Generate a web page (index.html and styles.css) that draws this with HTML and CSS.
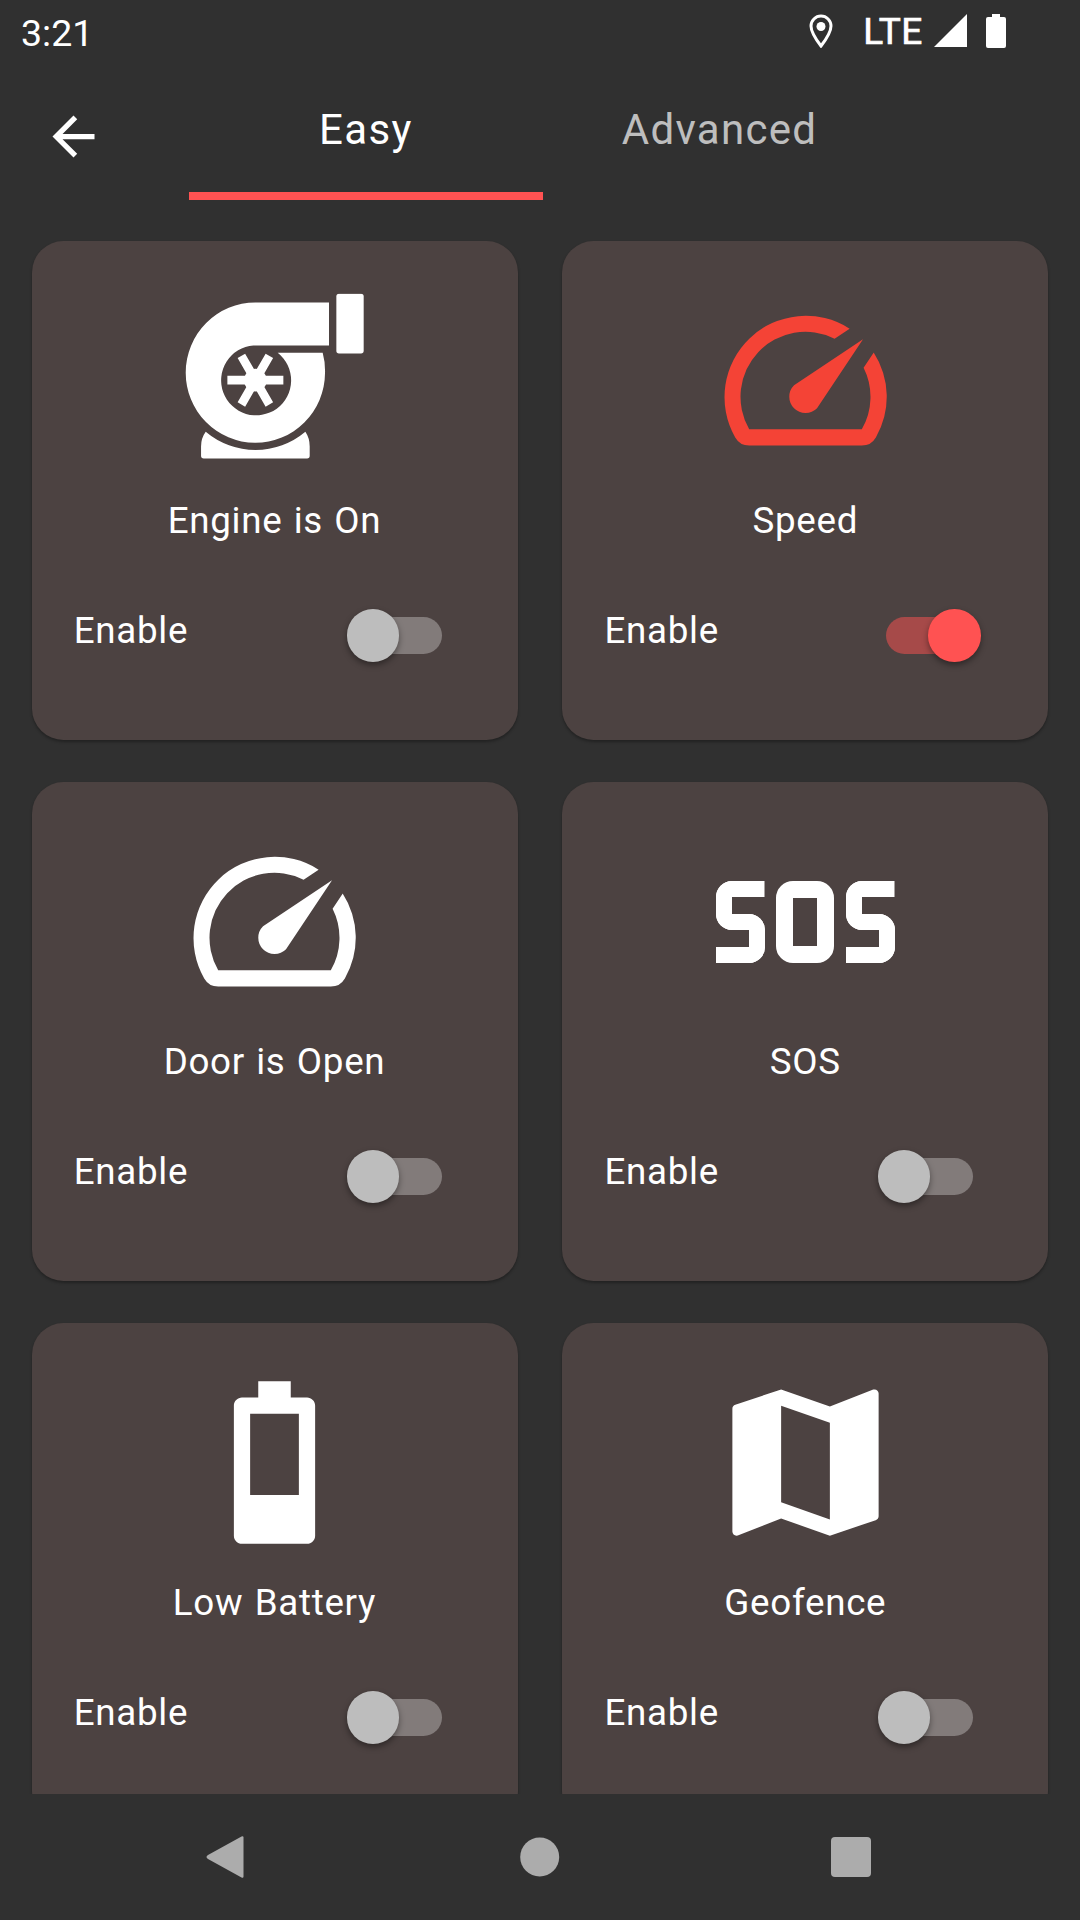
FILE: index.html
```html
<!DOCTYPE html>
<html lang="en">
<head>
  <meta charset="UTF-8" />
  <meta name="viewport" content="width=device-width, initial-scale=1.0">
  <title>Notifications</title>
  <link rel="stylesheet" href="styles.css">
</head>
<body>
  <div class="status-bar">
    <span class="clock">3:21</span>
    <div class="status-icons">
      <svg class="pin" viewBox="0 0 24 34">
        <path d="M12 2C6.500 2 2 6.500 2 12c0 7 10 20 10 20s10-13 10-20C22 6.500 17.500 2 12 2z" fill="none" stroke="#fff" stroke-width="3" />
        <circle cx="12" cy="12.500" r="4.500" fill="#fff" />
      </svg>
      <span class="network">LTE</span>
      <svg class="signal" viewBox="0 0 33 33"><path d="M33 0v33H0z" fill="#fff" /></svg>
      <svg class="battery" viewBox="0 0 20 34"><path d="M6 0h8v3h4q2 0 2 2v27q0 2-2 2H2q-2 0-2-2V5q0-2 2-2h4z" fill="#fff" /></svg>
    </div>
  </div>

  <header>
    <button class="back" aria-label="Back">
      <svg viewBox="0 0 24 24"><path d="M20 11H7.830l5.590-5.590L12 4l-8 8 8 8 1.410-1.410L7.830 13H20v-2z" /></svg>
    </button>
    <nav class="tabs">
      <a class="tab active">Easy</a>
      <a class="tab">Advanced</a>
    </nav>
  </header>

  <main>
    <div class="card">
      <div class="icon">
        <svg class="turbo" viewBox="494 191 540 496">
          <path d="M927 218H706A209 210.500 0 1 0 915 430Q916 398 908 369H773A105 105 0 1 1 700 347H927Z" />
          <rect x="949" y="192" width="82" height="179" rx="8" />
          <path d="M557 606A232 232 0 0 0 856 606Q869 625 869 650V678Q869 686 861 686H551Q543 686 543 678V650Q543 625 557 606Z" />
          <circle cx="706" cy="451" r="34" />
          <path d="M622 451H790M664 378L748 524M748 378L664 524" stroke="#fff" stroke-width="26" />
        </svg>
      </div>
      <div class="title">Engine is On</div>
      <div class="row"><span>Enable</span><span class="switch"></span></div>
    </div>

    <div class="card">
      <div class="icon red">
        <svg viewBox="0 0 24 24"><path d="M20.380 8.570l-1.230 1.850a8 8 0 0 1-.22 7.580H5.070A8 8 0 0 1 15.580 6.850l1.850-1.230A10 10 0 0 0 3.350 19a2 2 0 0 0 1.720 1h13.850a2 2 0 0 0 1.740-1 10 10 0 0 0-.27-10.440zM10.590 15.410a2 2 0 0 0 2.830 0l5.660-8.490-8.490 5.660a2 2 0 0 0 0 2.830z" /></svg>
      </div>
      <div class="title">Speed</div>
      <div class="row"><span>Enable</span><span class="switch on"></span></div>
    </div>

    <div class="card">
      <div class="icon">
        <svg viewBox="0 0 24 24"><path d="M20.380 8.570l-1.230 1.850a8 8 0 0 1-.22 7.580H5.070A8 8 0 0 1 15.580 6.850l1.850-1.230A10 10 0 0 0 3.350 19a2 2 0 0 0 1.720 1h13.850a2 2 0 0 0 1.740-1 10 10 0 0 0-.27-10.440zM10.590 15.410a2 2 0 0 0 2.830 0l5.660-8.490-8.490 5.660a2 2 0 0 0 0 2.830z" /></svg>
      </div>
      <div class="title">Door is Open</div>
      <div class="row"><span>Enable</span><span class="switch"></span></div>
    </div>

    <div class="card">
      <div class="icon sos">
        <i class="bend"></i><i class="ring"></i><i class="bend"></i>
      </div>
      <div class="title">SOS</div>
      <div class="row"><span>Enable</span><span class="switch"></span></div>
    </div>

    <div class="card">
      <div class="icon">
        <svg viewBox="0 0 24 24"><path d="M16 4h-2V2h-4v2H8c-.55 0-1 .45-1 1v16c0 .55.45 1 1 1h8c.55 0 1-.45 1-1V5c0-.55-.45-1-1-1zm-1 12H9V6h6v10z" /></svg>
      </div>
      <div class="title">Low Battery</div>
      <div class="row"><span>Enable</span><span class="switch"></span></div>
    </div>

    <div class="card">
      <div class="icon">
        <svg viewBox="0 0 24 24"><path d="M20.500 3l-.16.03L15 5.100 9 3 3.360 4.900c-.21.07-.36.25-.36.48V20.500c0 .28.22.5.5.5l.16-.03L9 18.900l6 2.100 5.640-1.900c.21-.07.36-.25.36-.48V3.500c0-.28-.22-.5-.5-.5zM15 19l-6-2.110V5l6 2.110V19z" /></svg>
      </div>
      <div class="title">Geofence</div>
      <div class="row"><span>Enable</span><span class="switch"></span></div>
    </div>
  </main>

  <footer>
    <svg viewBox="0 0 42 42"><path d="M37.500 1.500v39q0 2-2 1L2 23q-3-2 0-4L35.500 .5q2-1 2 1z" /></svg>
    <svg viewBox="0 0 42 42"><circle cx="21.700" cy="21" r="19.500" /></svg>
    <svg viewBox="0 0 42 42"><rect x="1" y="1" width="40" height="40" rx="4" /></svg>
  </footer>
</body>
</html>
```
FILE: styles.css
```css
*,
*::before,
*::after {
  box-sizing: border-box;
}

body {
  margin: 0;
  width: 1080px;
  height: 1920px;
  display: flex;
  flex-direction: column;
  background: #303030;
  color: #fff;
  font-family: Roboto, sans-serif;
  font-size: 36.75px;
  overflow: hidden;
}

svg {
  display: block;
}

/* status bar */
.status-bar {
  height: 63px;
  flex: none;
  display: flex;
  justify-content: space-between;
  padding: 10px 74px 0 21px;
}

.clock {
  padding-top: 1px;
  font-size: 37.5px;
}

.status-icons {
  display: flex;
  align-items: flex-start;
}

.pin {
  width: 24px;
  height: 34px;
  margin: 4px 30px 0 0;
}

.network {
  font-size: 37px;
  line-height: 43px;
  letter-spacing: 0.6px;
  -webkit-text-stroke: 0.7px #fff;
}

.signal {
  width: 33px;
  height: 33px;
  margin: 4px 19px 0 11px;
}

.battery {
  width: 20px;
  height: 34px;
  margin-top: 4px;
}

/* top tabs */
header {
  height: 136.6px;
  flex: none;
  display: flex;
}

.back {
  width: 189px;
  padding: 42px 0 0 42px;
  border: none;
  background: none;
  display: flex;
}

.back svg {
  width: 63px;
  height: 63px;
  fill: #fff;
}

.tabs {
  display: flex;
}

.tab {
  width: 353.7px;
  padding-top: 42px;
  text-align: center;
  font-size: 42px;
  letter-spacing: 1.3px;
  color: rgba(255, 255, 255, 0.7);
}

.tab.active {
  color: #fff;
  border-bottom: 8px solid #ff5252;
}

/* cards */
main {
  flex: 1;
  min-height: 0;
  overflow: hidden;
  display: grid;
  grid-template-columns: 486px 486px;
  grid-auto-rows: 499px;
  gap: 42px 44.8px;
  padding: 41.8px 0 0 31.5px;
}

.card {
  padding-top: 42px;
  border-radius: 31.5px;
  background: #4c4241;
  box-shadow: 0 2px 3px rgba(0, 0, 0, 0.3);
}

.icon {
  width: 195px;
  height: 195px;
  margin: 0 auto;
  fill: #fff;
}

.icon.red {
  fill: #f44336;
}

.turbo {
  width: 180px;
  height: 165.3px;
  margin: 0 auto;
  transform: translate(-0.3px, 10.5px);
}

.title {
  margin-top: 20.7px;
  text-align: center;
  line-height: 43px;
  letter-spacing: 0.7px;
  word-spacing: 1.5px;
}

.row {
  display: flex;
  justify-content: space-between;
  align-items: flex-start;
  margin-top: 67px;
  padding: 0 75.6px 0 42.2px;
  line-height: 43px;
  letter-spacing: 0.7px;
}

/* sos sign */
.sos {
  display: flex;
  justify-content: center;
  align-items: center;
  gap: 11.7px;
}

.bend {
  width: 49px;
  height: 82px;
  background:
    linear-gradient(#fff, #fff) top right / 50% 16px no-repeat,
    linear-gradient(#fff, #fff) bottom left / 50% 16px no-repeat;
}

.bend::before,
.bend::after {
  content: "";
  display: block;
  width: 33px;
  height: 49px;
  border: 16px solid #fff;
}

.bend::before {
  border-right: none;
  border-radius: 16px 0 0 16px;
}

.bend::after {
  margin: -16px 0 0 16px;
  border-left: none;
  border-radius: 0 16px 16px 0;
}

.ring {
  width: 58px;
  height: 82px;
  border: 17px solid #fff;
  border-radius: 17px;
}

/* switch */
.switch {
  position: relative;
  width: 86.6px;
  height: 36.75px;
  margin-top: 7.9px;
  border-radius: 19px;
  background: rgba(255, 255, 255, 0.3);
}

.switch::after {
  content: "";
  position: absolute;
  top: -7.9px;
  left: -8.5px;
  width: 52.5px;
  height: 52.5px;
  border-radius: 50%;
  background: #bdbdbd;
  box-shadow: 0 3px 6px rgba(0, 0, 0, 0.4);
}

.switch.on {
  background: rgba(255, 82, 82, 0.5);
}

.switch.on::after {
  left: 42px;
  background: #ff5252;
}

/* navigation bar */
footer {
  height: 126px;
  flex: none;
  display: flex;
  justify-content: space-between;
  align-items: center;
  padding: 0 208px 0 206px;
}

footer svg {
  width: 42px;
  height: 42px;
  fill: #acacac;
}
```
